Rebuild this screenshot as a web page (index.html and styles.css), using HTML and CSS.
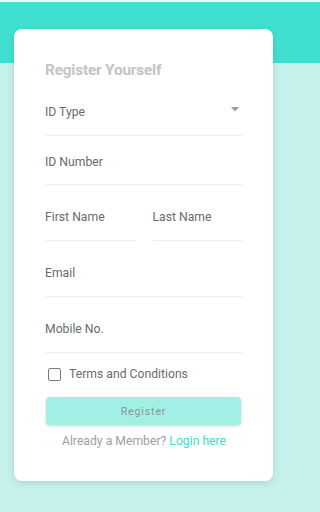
FILE: index.html
```html
<!DOCTYPE html>
<html>
<head>
<meta charset="utf-8">
<link rel="stylesheet" href="styles.css">
</head>
<body>
<div class="page">
  <div class="card">
    <h1 class="title">Register Yourself</h1>
    <div class="field field-select">
      <span class="label">ID Type</span>
      <svg class="caret" width="8" height="5" viewBox="0 0 8 5"><path d="M0 0h8L4 4.5z" fill="#9e9e9e"/></svg>
    </div>
    <div class="field field-short">
      <span class="label">ID Number</span>
    </div>
    <div class="row">
      <div class="field"><span class="label">First Name</span></div>
      <div class="field"><span class="label">Last Name</span></div>
    </div>
    <div class="field"><span class="label">Email</span></div>
    <div class="field"><span class="label">Mobile No.</span></div>
    <label class="terms">
      <span class="box"></span>
      <span>Terms and Conditions</span>
    </label>
    <button class="btn">Register</button>
    <p class="login">Already a Member? <a class="link">Login here</a></p>
  </div>
</div>
</body>
</html>
```
FILE: styles.css
```css
html, body {
  margin: 0;
  padding: 0;
}
body {
  min-height: 512px;
  font-family: Roboto, "Noto Sans", sans-serif;
  background: linear-gradient(to bottom, #e6f7f5 0, #e6f7f5 2px, #40e0d0 2px, #40e0d0 63px, #c6f2ee 63px, #c6f2ee 100%) no-repeat;
  background-color: #c6f2ee;
}
.page {
  width: 287px;
  padding: 29px 14px 0 14px;
  box-sizing: border-box;
}
.card {
  background: #fff;
  border-radius: 8px;
  box-shadow: 0 2px 8px rgba(0, 0, 0, 0.12);
  height: 452px;
  box-sizing: border-box;
  padding: 0 30px 0 31px;
  display: flex;
  flex-direction: column;
}
.title {
  margin: 0;
  padding-top: 31px;
  height: 20px;
  line-height: 20px;
  font-size: 15.4px;
  font-weight: 700;
  color: #c4c4c4;
  letter-spacing: -0.2px;
}
.field {
  display: flex;
  align-items: center;
  border-bottom: 1px solid #eeeeee;
  padding: 24px 0 15px 0;
  height: 16px;
}
.field-select {
  padding-top: 24px;
  padding-bottom: 15px;
}
.field-short {
  padding-top: 18px;
  padding-bottom: 14px;
}
.label {
  font-size: 12.2px;
  line-height: 16px;
  color: #6b6b6b;
  flex: 1;
}
.caret {
  margin-right: 4px;
  margin-top: -6px;
}
.row {
  display: flex;
  gap: 17px;
}
.row .field {
  flex: 1;
}
.terms {
  display: flex;
  align-items: center;
  margin-top: 13px;
  padding-left: 3px;
  font-size: 12.2px;
  color: #6b6b6b;
  height: 16px;
}
.box {
  width: 11px;
  height: 11px;
  border: 1.5px solid #7a7a7a;
  border-radius: 2px;
  margin-right: 8px;
}
.btn {
  margin: 15px 2px 0 1px;
  height: 28px;
  border: none;
  border-radius: 4px;
  background: #a2efe6;
  color: #8a9694;
  font-family: Roboto, sans-serif;
  font-size: 10.5px;
  letter-spacing: 0.9px;
  box-shadow: 0 1px 3px rgba(0, 0, 0, 0.18);
  padding: 0;
}
.login {
  margin: 7px 0 0 0;
  text-align: center;
  font-size: 12.2px;
  line-height: 18px;
  color: #a0a0a0;
}
.link {
  color: #40dcca;
}
```
